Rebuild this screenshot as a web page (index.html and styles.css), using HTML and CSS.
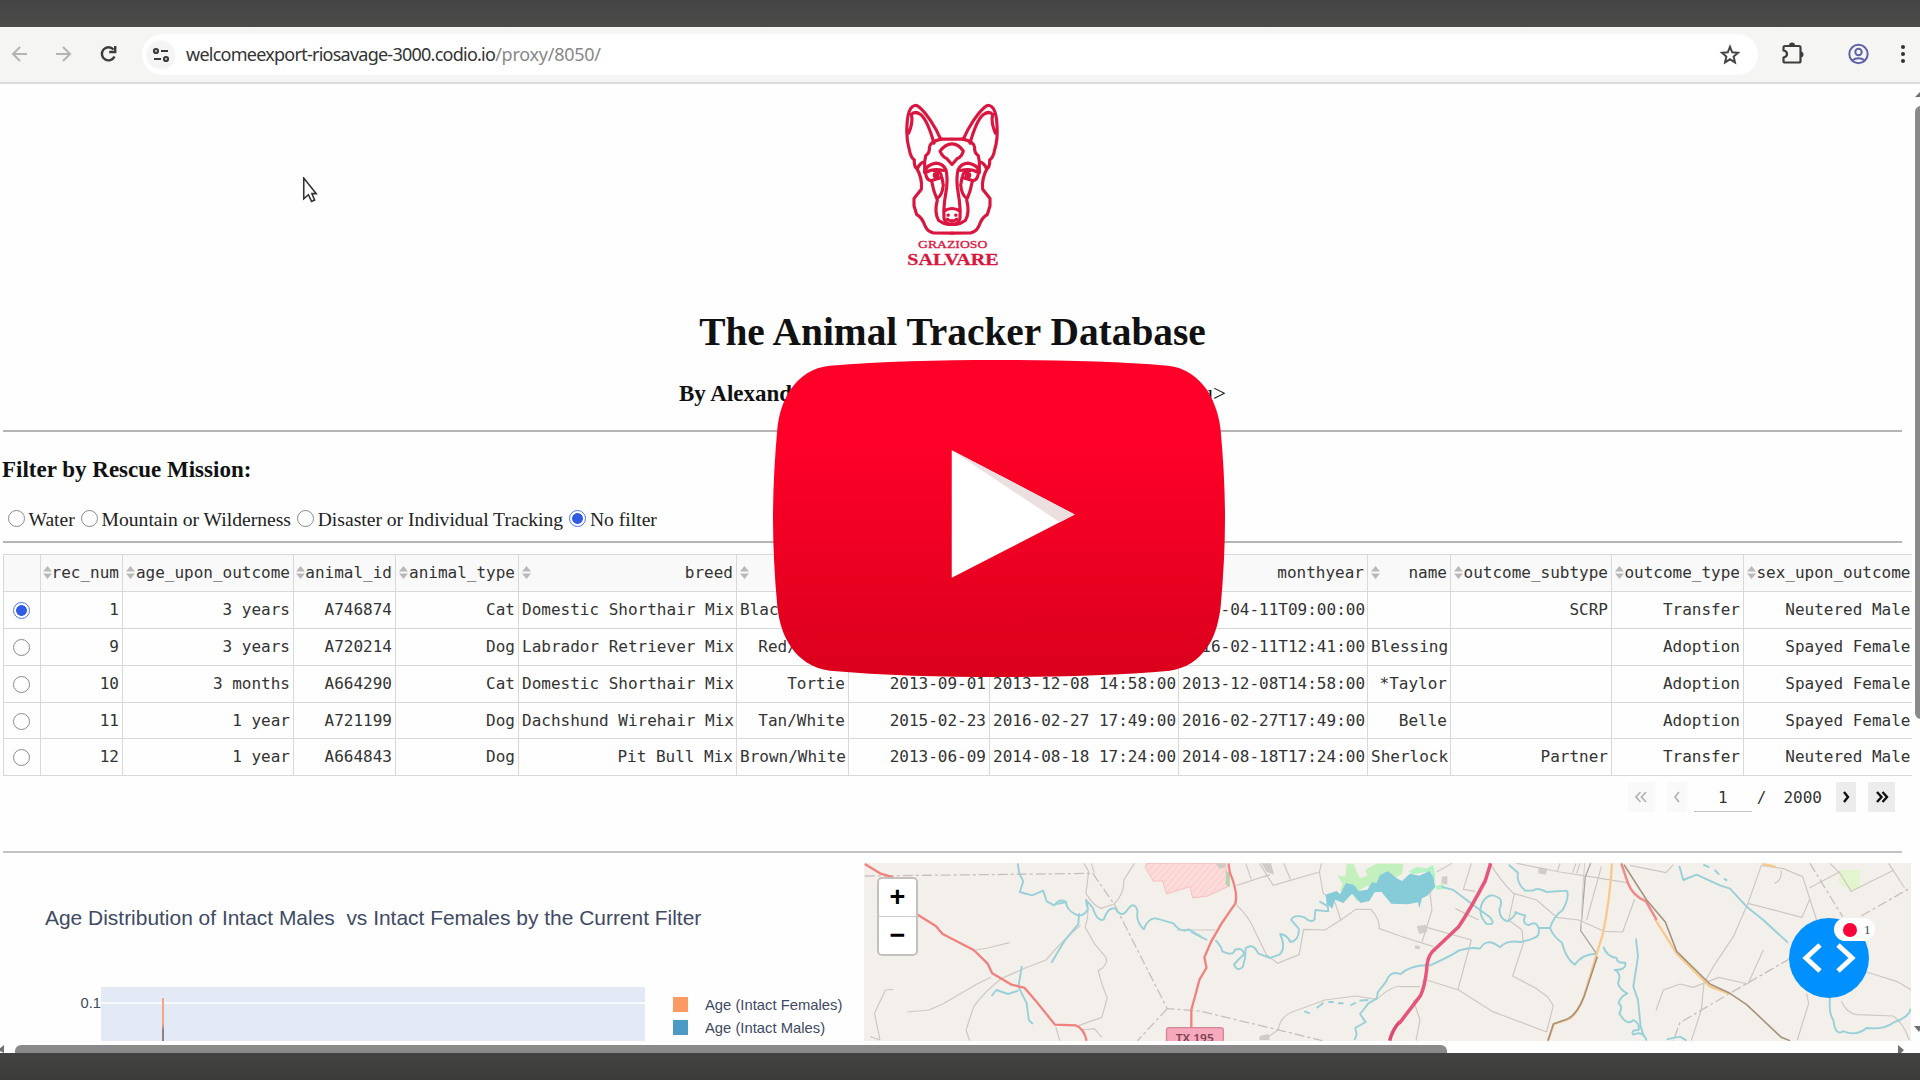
FILE: index.html
```html
<!DOCTYPE html>
<html lang="en">
<head>
<meta charset="utf-8">
<title>The Animal Tracker Database</title>
<link rel="stylesheet" href="styles.css">
</head>
<body>
<svg class="defs" width="0" height="0"><defs>
  <symbol id="sort" viewBox="0 0 9 13"><path d="M4.5 0L9 5.6H0zM4.5 13L9 7.4H0z" fill="#b9b9b9"/></symbol>
</defs></svg>
<div class="bar bar-top"></div>
<header class="toolbar">
  <svg class="nav" viewBox="0 0 142 55" fill="none" stroke="#b4b4b4" stroke-width="2">
    <path d="M27 27H13M20 20l-7 7 7 7M56 27h14M63 20l7 7-7 7"/>
    <path stroke="#3c3c3c" stroke-width="2.4" d="M113.500 22.500A6.600 6.600 0 1 0 114.500 29.500M115.200 19v6h-6"/>
  </svg>
  <div class="omnibox">
    <svg class="site" viewBox="0 0 30 30" fill="none" stroke="#3c3c3c" stroke-width="2.200"><circle cx="15" cy="15" r="14.500" fill="#f5f5f5" stroke="none"/><circle cx="10" cy="11" r="2"/><path d="M15 11h7M8 19h7"/><circle cx="20" cy="19" r="2"/></svg>
    <div class="url"><span class="host">welcomeexport-riosavage-3000.codio.io</span><span class="path">/proxy/8050/</span></div>
    <svg class="star" viewBox="0 0 20 20" fill="none" stroke="#444" stroke-width="1.800"><path d="M10 2.500l2 5 5.300.4-4 3.500 1.200 5.300-4.500-2.800-4.500 2.800 1.200-5.300-4-3.500 5.300-.4z"/></svg>
  </div>
  <svg class="tools" viewBox="0 0 162 55">
    <path fill="none" stroke="#3c3c3c" stroke-width="2.200" stroke-linejoin="round" d="M27 19h14q1.500 0 1.500 1.500V34q0 1.500-1.500 1.500H27q-1.500 0-1.500-1.500v-3.500q3.500-.5 3.500-3.500t-3.500-3.500v-3q0-1.500 1.500-1.500z"/>
    <path fill="#3c3c3c" d="M31 18.500a3 3 0 0 1 6 0zM42.500 24.500a3 3 0 0 1 0 6z"/>
    <g fill="none" stroke="#5f62a8" stroke-width="2"><circle cx="100.500" cy="27" r="9.200"/><circle cx="100.500" cy="25" r="3.200"/><path d="M94 33.500q6.500-4.500 13 0"/></g>
    <g fill="#333"><circle cx="145" cy="20" r="2"/><circle cx="145" cy="27" r="2"/><circle cx="145" cy="34" r="2"/></g>
  </svg>
</header>
<main class="page">
  <section class="intro">
    <svg class="logo" viewBox="75 35 285 500" fill="none" stroke="#d9163f" stroke-width="9.500" stroke-linejoin="round" stroke-linecap="round">
      <g id="ear"><path d="M182 146C168 112 138 66 118 50Q103 38 92 54Q82 70 81 105Q78 145 88 178Q92 202 103 208Q102 222 106 230M86 128Q100 95 94 72Q104 60 122 72Q142 88 162 158"/><path d="M184 146Q150 152 148 172Q150 186 137 196L134 214Q118 218 112 236M134 214V246"/></g>
      <use href="#ear" transform="translate(432 0) scale(-1 1)"/>
      <path d="M182 146H250M180 182Q196 160 216 160T250 182Q244 200 232 204L216 222 200 204Q188 200 180 182z"/>
      <g id="cheek"><path d="M108 230Q128 262 124 296L102 324V346L110 372Q126 380 136 408Q144 424 160 427L216 428M134 244Q140 222 168 218Q190 220 198 238Q203 260 200 290L194 330Q190 360 192 384Q198 402 216 402M138 246Q160 232 190 240M136 246Q140 272 155 270L182 262Q190 244 160 240M155 272Q160 300 170 324Q186 318 190 284L186 262M172 328Q162 366 176 390Q190 400 204 402M192 362Q204 354 216 354M204 374h1"/><circle cx="168" cy="254" r="5"/></g>
      <use href="#cheek" transform="translate(432 0) scale(-1 1)"/>
      <path d="M202 386Q216 398 230 386M216 390v10"/>
      <g fill="#d9163f" stroke-width=".8" font-family="'Liberation Serif',serif" text-anchor="middle"><text x="218" y="472" font-size="30" textLength="208" lengthAdjust="spacingAndGlyphs">GRAZIOSO</text><text x="219" y="524" font-size="48" font-weight="bold" textLength="274" lengthAdjust="spacingAndGlyphs">SALVARE</text></g>
    </svg>
    <h1>The Animal Tracker Database</h1>
    <h3 class="byline"><span>By Alexander</span><span class="tail">u&gt;</span></h3>
  </section>
  <section class="filter">
    <h3>Filter by Rescue Mission:</h3>
    <div class="options">
      <label><i class="radio"></i><span>Water</span></label>
      <label><i class="radio"></i><span>Mountain or Wilderness</span></label>
      <label><i class="radio"></i><span>Disaster or Individual Tracking</span></label>
      <label><i class="radio on"></i><span>No filter</span></label>
    </div>
  </section>
  <section class="records">
    <table>
      <colgroup><col class="w0"><col class="w1"><col class="w2"><col class="w3"><col class="w4"><col class="w5"><col class="w6"><col class="w7"><col class="w8"><col class="w8"><col class="w9"><col class="w10"><col class="w11"><col class="w12"></colgroup>
      <tr><th></th><th><div><svg><use href="#sort"/></svg>rec_num</div></th><th><div><svg><use href="#sort"/></svg>age_upon_outcome</div></th><th><div><svg><use href="#sort"/></svg>animal_id</div></th><th><div><svg><use href="#sort"/></svg>animal_type</div></th><th><div><svg><use href="#sort"/></svg>breed</div></th><th><div><svg><use href="#sort"/></svg>color</div></th><th><div>birth</div></th><th><div><svg><use href="#sort"/></svg>datetime</div></th><th><div><svg><use href="#sort"/></svg>monthyear</div></th><th><div><svg><use href="#sort"/></svg>name</div></th><th><div><svg><use href="#sort"/></svg>outcome_subtype</div></th><th><div><svg><use href="#sort"/></svg>outcome_type</div></th><th><div><svg><use href="#sort"/></svg>sex_upon_outcome</div></th></tr>
      <tr><td><i class="radio on"></i></td><td>1</td><td>3 years</td><td>A746874</td><td>Cat</td><td>Domestic Shorthair Mix</td><td>Black/White</td><td>2014-04-10</td><td>2017-04-11 09:00:00</td><td>2017-04-11T09:00:00</td><td></td><td>SCRP</td><td>Transfer</td><td>Neutered Male</td></tr>
      <tr><td><i class="radio"></i></td><td>9</td><td>3 years</td><td>A720214</td><td>Dog</td><td>Labrador Retriever Mix</td><td>Red/White</td><td>2013-02-04</td><td>2016-02-11 12:41:00</td><td>2016-02-11T12:41:00</td><td>Blessing</td><td></td><td>Adoption</td><td>Spayed Female</td></tr>
      <tr><td><i class="radio"></i></td><td>10</td><td>3 months</td><td>A664290</td><td>Cat</td><td>Domestic Shorthair Mix</td><td>Tortie</td><td>2013-09-01</td><td>2013-12-08 14:58:00</td><td>2013-12-08T14:58:00</td><td>*Taylor</td><td></td><td>Adoption</td><td>Spayed Female</td></tr>
      <tr><td><i class="radio"></i></td><td>11</td><td>1 year</td><td>A721199</td><td>Dog</td><td>Dachshund Wirehair Mix</td><td>Tan/White</td><td>2015-02-23</td><td>2016-02-27 17:49:00</td><td>2016-02-27T17:49:00</td><td>Belle</td><td></td><td>Adoption</td><td>Spayed Female</td></tr>
      <tr><td><i class="radio"></i></td><td>12</td><td>1 year</td><td>A664843</td><td>Dog</td><td>Pit Bull Mix</td><td>Brown/White</td><td>2013-06-09</td><td>2014-08-18 17:24:00</td><td>2014-08-18T17:24:00</td><td>Sherlock</td><td>Partner</td><td>Transfer</td><td>Neutered Male</td></tr>
    </table>
    <nav class="pager">
      <span class="btn off"><svg viewBox="0 0 14 12"><path d="M6.500 1L2 6l4.500 5M12 1L7.500 6l4.500 5"/></svg></span>
      <span class="btn one off"><svg viewBox="0 0 14 12"><path d="M9 1L5 6l4 5"/></svg></span>
      <span class="current">1</span><span class="slash">/</span><span class="total">2000</span>
      <span class="btn one"><svg viewBox="0 0 14 12"><path d="M5 1l4 5-4 5"/></svg></span>
      <span class="btn last"><svg viewBox="0 0 14 12"><path d="M2 1l4.500 5L2 11M7.500 1l4.500 5-4.500 5"/></svg></span>
    </nav>
  </section>
  <section class="panels">
    <div class="chart">
      <h2>Age Distribution of Intact Males&nbsp; vs Intact Females by the Current Filter</h2>
      <div class="chart-body">
        <span class="tick">0.1</span>
        <div class="plot"><div class="grid"></div><div class="stick"></div></div>
        <ul class="legend"><li><i class="sw orange"></i>Age (Intact Females)</li><li><i class="sw blue"></i>Age (Intact Males)</li></ul>
      </div>
    </div>
    <div class="map">
      <svg class="tiles" viewBox="0 0 1047 178">
        <defs><pattern id="hatch" width="14" height="14" patternUnits="userSpaceOnUse" patternTransform="rotate(40)"><rect width="14" height="14" fill="#fcdcda"/><path d="M0 0V14" stroke="#f8c6c4" stroke-width="4"/></pattern></defs>
        <g transform="translate(-4 -23) scale(.3444 .3333)">
          <path fill="url(#hatch)" stroke="#f7c0be" stroke-width="1" d="M832 70L828 82L852 124L878 122L890 162L958 140L966 174L1010 168L1068 140L1062 70z"/>
          <path fill="#cfcbc6" d="M1032 70h30v12l-18 4zM1165 70h28l10 34-22-8zM1160 588l26-6 4 18h-30z"/>
          <path fill="#b9d3ae" d="M1062 92l12 8v42l-12-8z"/>
          <g class="minor"><path d="M650 70L664 94 656 160Q680 200 700 205L738 192Q768 160 766 120L797 70M672 70L680 98M656 190Q668 210 654 262L680 310 714 352Q722 376 692 392Q700 430 718 474L702 532 636 556M640 256Q590 300 540 360L480 384 410 416Q360 456 330 500L308 570 318 602M380 412L340 432 240 492 200 510 138 516M336 330L370 324 434 308M96 448L74 450 42 520 58 600 30 590M568 560L580 602M640 570L680 566 702 592M1092 194Q1130 230 1145 270L1180 344 1212 370 1275 344 1288 268 1350 270 1396 240 1440 208H1484Q1510 240 1508 266L1568 288M1396 240L1380 190 1345 160 1334 96 1340 70M1334 96L1200 136 1160 70M1094 136L1190 104M1120 70L1136 118M1230 70L1250 118M920 270H1032M1568 438Q1540 440 1500 478L1440 468 1350 480 1255 516Q1220 530 1214 570L1186 590"/></g>
          <g class="border"><path d="M14 108L360 104 676 100 740 196 892 506 990 514 1200 566 1342 602M892 506L806 602"/></g>
          <g class="river"><path d="M458 70L462 98 474 124 464 156 500 166 532 152 542 184 564 196Q580 174 598 186Q600 210 624 222Q646 236 662 208L656 180 676 204Q690 248 708 238Q722 198 742 206Q760 236 776 210Q798 180 806 214Q800 244 824 268Q838 230 862 236L910 250Q930 280 954 268L990 290M636 220L634 252 594 302 556 368M470 378L460 440 484 490 490 540 502 552M460 452L430 462 396 450 382 468M1032 300Q1050 320 1052 334Q1084 350 1088 330Q1110 320 1116 342Q1098 358 1086 374Q1096 398 1112 380Q1120 354 1120 324Q1142 308 1156 340L1190 354 1218 344Q1238 324 1220 282Q1240 284 1250 306Q1276 302 1274 266L1252 240Q1260 222 1290 232Q1310 250 1320 238L1322 210 1360 214 1356 188M1568 402Q1540 390 1528 424L1504 456 1500 476 1476 490 1452 522 1468 546 1438 564 1442 584 1436 600M1290 514L1306 520M1326 504L1346 488M1360 486H1376M1388 490H1404M1424 496L1440 488M1450 482L1476 480"/><path stroke-width="3.500" d="M1334 184L1360 200 1354 164M962 276L1008 300M570 192L600 186"/></g>
          <g class="trunk"><path d="M14 72L58 100 96 112M164 222L220 258 240 282 330 330 370 370 384 400 440 434 478 444 510 482 566 554 626 556Q650 564 658 602M1070 70L1074 98Q1098 156 1090 190L1050 250 1020 304 1000 352 1006 384 986 418 962 510V562"/></g>
          <path d="M1568 544Q1545 570 1538 602" fill="none" stroke="#e0486f" stroke-width="3.500"/>
          <rect x="890" y="563" width="165" height="70" rx="8" fill="#f6a9bd" stroke="#d58798" stroke-width="4"/>
          <text x="972" y="606" class="shield" textLength="110" lengthAdjust="spacingAndGlyphs">TX 195</text>
        </g>
        <g transform="translate(416 -8) scale(.3333)">
          <path fill="#c4f0bd" d="M172 60L196 66 200 26H220L240 70 262 62 256 44 290 26H370L366 56 300 100 262 92 240 104 232 142 216 108 180 106 188 88z"/>
          <path fill="#b5f3c4" d="M385 50L410 36 440 40 460 30 466 60 464 80 440 50 400 58zM466 92L490 88 496 102 470 104z"/>
          <path fill="#86cbd8" d="M140 118L170 108 180 118 198 84 222 90 236 108 262 104 276 82 290 84 300 60 324 48 350 70 366 78 390 56 418 62 448 48 460 66 466 96 442 122 426 130 418 160 414 142 384 148 334 146 304 110 284 112 268 138 242 144 216 116 190 144 166 134 156 162 140 140z"/>
        </g>
        <g transform="translate(536 -23) scale(.3333)">
          <path fill="#e3f5cf" d="M1320 90h60v50l-28 16-36-30z"/>
          <path fill="#d2cdc8" d="M50 258l28-4 4 22-24 6zM46 316l14 2-2 10-14-2zM126 110l16-2v26l-18-4zM416 82l26 4-4 18-24-4z"/>
          <g class="minor"><path d="M156 70L110 96M96 150L90 160 96 210 66 306M0 288L100 320M214 70L190 148 226 154M166 206L236 240M80 262L214 300 174 448M270 70Q300 120 340 160L410 180 470 232 536 240 612 274 668 276 704 178M344 158L326 240 366 270 370 310 338 408 410 446 442 470 460 496 440 576M80 420L176 450 276 514 440 576M0 440H60M40 480L60 540 48 602M350 70L480 96 570 110 680 128M480 70L472 96M528 70L518 98M540 70L530 100M604 80L560 240M690 76L798 98 820 74M1084 76L1044 190 1000 290 940 380 912 430 904 510 874 602M1084 76L1150 86 1208 110 1250 240M1144 92Q1146 120 1124 130M1044 190L1206 232 1230 176M1228 144L1318 96 1354 154 1482 90M1290 70L1320 100M1466 70L1514 144M768 512L790 450 840 432 880 442 956 412 1044 432 1090 330M1220 460L1226 490 1192 600M1400 396L1490 424 1534 450M1324 484Q1340 520 1370 524L1480 528Q1510 548 1528 600"/></g>
          <g class="border"><path d="M1230 70L1328 230M1384 228L1534 142M1170 356L990 460 840 548 820 602"/></g>
          <g class="river"><path d="M0 404Q30 374 90 376Q150 350 176 332Q210 320 240 326Q260 290 300 322Q320 300 360 306Q390 300 402 294Q420 290 416 264L450 264Q460 230 488 210Q510 170 500 152L440 156Q410 140 400 152H376Q348 130 354 98L326 74M124 140L160 150 240 210 270 232Q290 256 260 252Q230 220 248 186Q270 152 300 176Q308 190 298 208Q300 240 324 244Q350 224 346 216Q360 224 376 226Q364 250 386 256Q408 240 416 264M450 264Q460 290 486 308Q498 356 524 374Q550 340 588 342M610 320Q620 350 650 354Q650 370 676 368Q680 390 644 390Q666 400 654 430Q660 450 682 460Q660 470 656 490Q670 500 658 520Q680 560 700 540Q720 550 716 570Q690 570 700 584Q730 570 740 602M708 296L714 350 700 440 714 480 722 560 732 590M838 78L850 120 890 104 960 136 990 146 1040 200 1090 240 1164 308M910 74L928 82M944 90L958 104M972 116L982 122M1290 474Q1286 520 1300 540Q1306 590 1330 574Q1370 590 1400 564Q1450 570 1480 548Q1530 530 1532 506M800 598L840 590 860 602"/></g>
          <path class="rd" stroke="#aba6a2" stroke-width="1.300" d="M572 70L556 110 542 272 590 342"/>
          <path class="rd" stroke="#d0cbc6" d="M554 70Q546 160 544 260"/>
          <path class="rd" stroke="#f8c98d" stroke-width="2.300" d="M636 70Q630 180 608 284L590 342 552 470Q530 530 500 540L462 552 444 602M764 236L830 340 930 440 990 462M1088 72L1126 80"/>
          <path class="rd" stroke="#f08a89" stroke-width="2.500" d="M664 70L684 130Q700 170 738 184L770 240"/>
          <path class="rd" stroke="#a4937c" stroke-width="1.600" d="M672 74L740 180 796 246 830 334 930 432 990 460 1040 494 1144 592 1170 602M592 350L552 470Q530 526 500 538L460 552 444 602"/>
          <path class="rd" stroke="#e8557a" stroke-width="3.500" d="M272 70L256 122Q210 210 176 260L96 336Q80 356 80 390Q74 440 62 466L-2 550"/>
        </g>
      </svg>
      <div class="zoomer"><span>+</span><span>−</span></div>
    </div>
  </section>
  <div class="vscroll"></div>
  <svg class="arrows" viewBox="0 0 1920 969" fill="#707070"><path d="M1915 13l6-6v6zM1914 942h8l-3 6zM4 961v8l-6-3zM1898 961l6 5-4 4h-2z"/></svg>
  <div class="hscroll"></div>
</main>
<div class="bar bar-bottom"></div>

<svg class="cursor" viewBox="0 0 14 25"><path d="M1 1v20l4.500-4 3 6.500 3-1.300-2.700-6.200H13z" fill="#fff" stroke="#333" stroke-width="1.500"/></svg>
<div class="debug"><svg viewBox="0 0 80 80" fill="none" stroke="#fff" stroke-width="5"><path d="M31 27L17 40l14 13M49 27l14 13-14 13"/></svg><div class="errors"><i></i>1</div></div>
<svg class="play" viewBox="286 209 1143 952" preserveAspectRatio="none">
  <defs><linearGradient id="red" x1="0" y1="0" x2="0" y2="1"><stop offset="0" stop-color="#ff0029"/><stop offset=".25" stop-color="#ff0028"/><stop offset="1" stop-color="#da001c"/></linearGradient></defs>
  <path fill="url(#red)" d="M430 226C560 214 700 209 857 209S1160 214 1284 226C1330 231 1362 262 1384 300C1404 340 1414 376 1418 420C1425 510 1429 600 1429 685S1425 860 1418 950C1412 1010 1398 1050 1384 1072C1362 1110 1330 1136 1290 1142C1160 1156 1000 1161 857 1161S560 1156 430 1142C384 1136 352 1106 332 1072C312 1036 302 1000 297 950C290 860 286 770 286 685S290 510 297 415C301 370 312 330 330 298C354 258 386 231 430 226z"/>
  <path fill="#fff" d="M738 480L1049 673 738 863z"/><path fill="#ecdfe0" d="M738 480L1049 673 1011 696z"/>
</svg>
</body>
</html>
```
FILE: styles.css
```css
* { box-sizing: border-box; }
body { margin: 0; width: 1920px; height: 1080px; overflow: hidden; position: relative; display: flex; flex-direction: column; background: #fefefe; font-family: "Liberation Serif", serif; color: #222; }
.defs { position: absolute; }
.bar { height: 27px; flex: none; background: linear-gradient(#454545, #4b4b4a); }
.bar-bottom { background: linear-gradient(#434342, #3b3b3a); }
.toolbar { height: 57px; flex: none; display: flex; align-items: flex-start; background: #f5f5f4; border-bottom: 2px solid #dcdcdb; }
.nav { width: 142px; height: 55px; flex: none; }
.omnibox { width: 1616px; height: 41px; margin-top: 7px; border-radius: 21px; background: #fff; display: flex; align-items: center; padding: 0 17px 0 4px; }
.site { width: 30px; height: 30px; }
.url { margin-left: 10px; flex: 1; font: 18px/26px "Noto Sans", sans-serif; margin-top: -2px; color: #333; white-space: nowrap; }
.host { letter-spacing: -0.75px; }
.path { letter-spacing: -0.25px; color: #888; }
.star { width: 22px; height: 22px; }
.tools { width: 162px; height: 55px; }

.page { height: 969px; flex: none; position: relative; overflow: hidden; }
.intro { height: 348px; width: 1899px; margin-left: 3px; border-bottom: 2px solid #b5b5b5; display: flex; flex-direction: column; align-items: center; padding-top: 18px; }
.logo { width: 95px; height: 167px; flex: none; }
h1, h2, h3 { margin: 0; white-space: nowrap; }
h1 { font-size: 39.4px; line-height: 44px; margin-top: 41px; color: #111; }
.byline { width: 547px; display: flex; justify-content: space-between; line-height: 28px; margin-top: 26px; }
h3 { font-size: 23px; color: #111; }
.tail { font-weight: normal; }
.filter { height: 111px; width: 1899px; margin-left: 3px; border-bottom: 2px solid #b5b5b5; padding-top: 24px; }
.filter h3 { line-height: 28px; margin-left: -1px; }
.options { display: flex; align-items: center; height: 26px; margin-top: 23px; padding-left: 5px; font-size: 19.6px; }
label { display: flex; align-items: center; gap: 3.500px; margin-right: 6.300px; white-space: nowrap; }
.radio { display: block; flex: none; width: 17px; height: 17px; border: 1.500px solid #8a8a8a; border-radius: 50%; background: #fff; }
.options .radio { margin-top: -4px; }
.radio.on { border: 1.500px solid #4f74ea; background: radial-gradient(circle, #2f5be6 0 5px, #fff 5.700px); }

.records { height: 308px; width: 1912px; margin-left: 3px; padding-top: 11px; font: 16px "DejaVu Sans Mono", monospace; color: #333; }
table { table-layout: fixed; width: 1908px; border-collapse: collapse; border-right: 0; }
tr { height: 36.900px; }
th, td { border: 1.500px solid #d8d8d8; padding: 0 3px 0 3px; text-align: right; white-space: nowrap; font-weight: normal; overflow: hidden; height: 36.900px; line-height: 20px; }
th { background: #f9f9f9; }
th:last-child, td:last-child { border-right: 0; padding-right: 1px; }
th div { display: flex; justify-content: flex-end; align-items: center; }
th svg { width: 9px; height: 13px; flex: none; margin-right: auto; }
td .radio { margin: 1px 0 0 6px; }
.w0 { width: 37px; } .w1 { width: 82px; } .w2 { width: 171px; } .w3 { width: 102px; } .w4 { width: 123px; } .w5 { width: 218px; } .w6 { width: 112px; } .w7 { width: 141px; } .w8 { width: 189px; } .w9 { width: 83px; } .w10 { width: 161px; } .w11 { width: 132px; } .w12 { width: 168px; }
.pager { display: flex; justify-content: flex-end; align-items: center; height: 30px; margin-top: 6px; padding-right: 20px; }
.btn { width: 27px; height: 30px; background: #ececec; display: flex; align-items: center; justify-content: center; }
.btn.one { width: 20px; margin-left: 12px; }
.btn.last { margin-left: 12px; }
.btn svg { width: 16px; height: 12px; flex: none; fill: none; stroke: #111; stroke-width: 2.400; }
.btn.off { background: #f9f9f9; }
.btn.off svg { stroke: #b5b5b5; stroke-width: 1.800; }
.current { width: 58px; height: 30px; margin-left: 7px; border-bottom: 1.500px solid #c4c4c4; text-align: center; line-height: 32px; }
.slash { margin-left: 5px; }
.total { margin-left: 17px; margin-right: 2px; }

.panels { width: 1909px; height: 190px; margin-left: 2px; display: flex; font-family: "Liberation Sans", sans-serif; color: #404a63; position: relative; }
.panels::before { content: ""; position: absolute; left: 1px; top: 0; width: 1899px; height: 2px; background: #c4c4c4; }
.chart { width: 862px; padding-top: 54px; }
.chart h2 { font-size: 20.950px; font-weight: normal; line-height: 26px; margin-left: 43px; }
.chart-body { display: flex; margin-top: 56px; height: 54px; }
.tick { width: 99px; text-align: right; font-size: 14.700px; line-height: 32px; }
.plot { width: 544px; background: #e3eaf5; position: relative; }
.grid { margin-top: 15px; height: 2px; background: #f7fafe; }
.stick { position: absolute; left: 61px; top: 11px; width: 2px; height: 43px; background: linear-gradient(#f2a681 60%, #92807f 75%); }
.legend { list-style: none; margin: 6px 0 0 28px; padding: 0; font-size: 14.800px; }
.legend li { display: flex; align-items: center; height: 23px; gap: 17px; white-space: nowrap; }
.sw { width: 15px; height: 15px; }
.orange { background: #fb9a62; } .blue { background: #4c9ac4; }
.map { position: relative; width: 1047px; height: 178px; margin-top: 12px; background: #f3efea; overflow: hidden; }
.tiles { display: block; width: 1047px; height: 178px; }
.tiles path { vector-effect: non-scaling-stroke; }
.minor path, .border path, .river path, .trunk path, .rd { fill: none; stroke-linejoin: round; }
.minor path { stroke: #cdc8c3; stroke-width: 1.200; }
.border path { stroke: #c8bebe; stroke-width: 1.300; stroke-dasharray: 10 3 3 3; }
.river path { stroke: #98d0d8; stroke-width: 1.900; }
.trunk path { stroke: #f1807e; stroke-width: 2.300; }
.shield { font: 30px "Noto Sans", sans-serif; font-weight: 600; fill: #7a4453; text-anchor: middle; }
.zoomer { position: absolute; left: 13px; top: 14px; width: 41px; height: 79px; border: 2px solid #c4c1bd; border-radius: 5px; background: #fff; font: bold 27px/36px "Liberation Sans", sans-serif; color: #000; text-align: center; }
.zoomer span { display: block; height: 38px; }
.zoomer span:first-child { border-bottom: 1px solid #ccc; }

.vscroll { position: absolute; left: 1915px; top: 22px; width: 12px; height: 613px; border-radius: 6px; background: #8a8a8a; }
.hscroll { position: absolute; left: 15px; top: 961px; width: 1432px; height: 14px; border-radius: 6px; background: #8a8a8a; }
.arrows { position: absolute; left: 0; top: 0; width: 1920px; height: 969px; pointer-events: none; }
.cursor { position: absolute; left: 302px; top: 177px; width: 16px; height: 26px; }
.debug { position: absolute; left: 1789px; top: 918px; width: 80px; height: 80px; border-radius: 50%; background: #0090ff; }
.errors { position: absolute; left: 45px; top: 0; width: 41px; height: 23px; border-radius: 12px; background: #fff; display: flex; align-items: center; gap: 7px; padding-left: 9px; font-size: 13px; color: #444; }
.errors i { width: 14px; height: 14px; border-radius: 50%; background: #fb0039; }
.play { position: absolute; left: 773px; top: 360px; width: 452px; height: 317px; }
```
